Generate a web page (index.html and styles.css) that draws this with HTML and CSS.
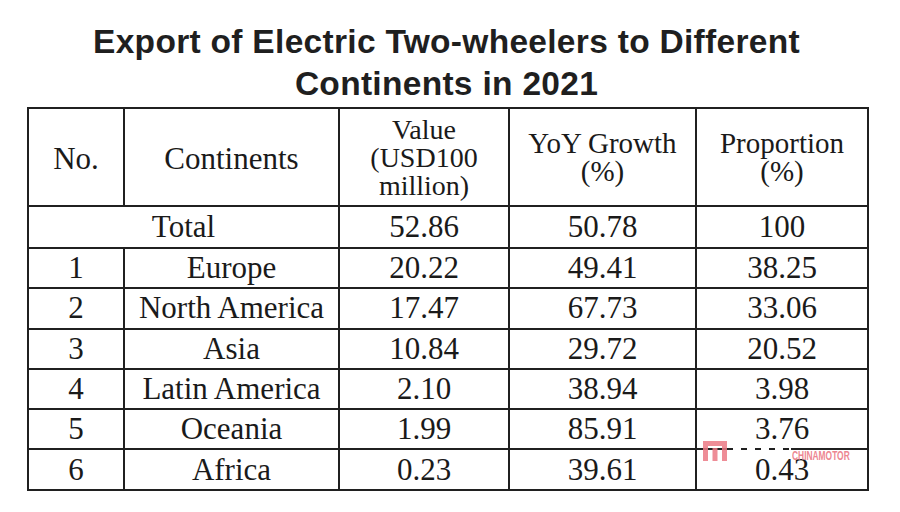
FILE: index.html
```html
<!DOCTYPE html>
<html lang="en">
<head>
<meta charset="utf-8">
<title>Export of Electric Two-wheelers to Different Continents in 2021</title>
<link rel="stylesheet" href="styles.css">
</head>
<body>
<div class="page">
  <h1 class="title">Export of Electric Two-wheelers to Different<br>Continents in 2021</h1>
  <div class="table-wrap">
    <table class="data">
      <colgroup>
        <col class="c-no"><col class="c-cont"><col class="c-val"><col class="c-yoy"><col class="c-prop">
      </colgroup>
      <thead>
        <tr class="head">
          <th>No.</th>
          <th>Continents</th>
          <th class="multi three">Value<br>(USD100<br>million)</th>
          <th class="multi">YoY Growth<br>(%)</th>
          <th class="multi">Proportion<br>(%)</th>
        </tr>
      </thead>
      <tbody>
        <tr class="total"><td colspan="2">Total</td><td>52.86</td><td>50.78</td><td>100</td></tr>
        <tr><td>1</td><td>Europe</td><td>20.22</td><td>49.41</td><td>38.25</td></tr>
        <tr><td>2</td><td>North America</td><td>17.47</td><td>67.73</td><td>33.06</td></tr>
        <tr><td>3</td><td>Asia</td><td>10.84</td><td>29.72</td><td>20.52</td></tr>
        <tr><td>4</td><td>Latin America</td><td>2.10</td><td>38.94</td><td>3.98</td></tr>
        <tr><td>5</td><td>Oceania</td><td>1.99</td><td>85.91</td><td>3.76</td></tr>
        <tr><td>6</td><td>Africa</td><td>0.23</td><td>39.61</td><td>0.43</td></tr>
      </tbody>
    </table>
    <div class="watermark">
      <svg class="wm-logo" width="24" height="20" viewBox="0 0 24 20">
        <path d="M0 0h24v5H0z M0 5h5v15H0z M9.5 7h5v13h-5z M19 5h5v15h-5z" fill="#ec7a86"/>
      </svg>
      <span class="wm-dash"></span>
      <span class="wm-text">CHINAMOTOR</span>
    </div>
  </div>
</div>
</body>
</html>
```

FILE: styles.css
```css
html, body {
  margin: 0;
  padding: 0;
  background: #ffffff;
}

.page {
  width: 900px;
  height: 512px;
  padding-top: 21px;
  box-sizing: border-box;
}

.title {
  margin: 0 0 2px 0;
  font-family: "Liberation Sans", Arial, sans-serif;
  font-weight: 700;
  font-size: 33.5px;
  line-height: 42px;
  color: #1f1f1f;
  text-align: center;
  letter-spacing: 0.3px;
  width: 893px;
}

.table-wrap {
  position: relative;
  margin-left: 27px;
  width: 840px;
}

.data {
  border-collapse: collapse;
  width: 840px;
  table-layout: fixed;
  font-family: "Liberation Serif", "Times New Roman", serif;
  font-size: 31px;
  color: #1a1a1a;
  font-variant-numeric: oldstyle-nums;
}

.c-no { width: 96px; }
.c-cont { width: 215px; }
.c-val { width: 170px; }
.c-yoy { width: 187px; }
.c-prop { width: 172px; }

.data th,
.data td {
  border: 2px solid #202020;
  padding: 0;
  text-align: center;
  vertical-align: middle;
  font-weight: 400;
  line-height: 34px;
}

.data .head { height: 98px; }
.data .head th { padding-top: 4px; }
.data .head th.multi {
  font-size: 29px;
  line-height: 28px;
  padding-top: 0;
}
.data .head th.three {
  font-size: 28px;
  line-height: 28px;
  padding-top: 2px;
}

.data .total { height: 42px; }
.data tbody tr { height: 40.3px; }

.watermark {
  position: absolute;
  left: 676px;
  top: 334px;
  display: flex;
  align-items: flex-start;
  pointer-events: none;
}

.wm-logo {
  opacity: 0.85;
  flex: none;
}

.wm-dash {
  width: 58px;
  height: 2px;
  margin: 7px 1px 0 6px;
  background: repeating-linear-gradient(90deg, #ffffff 0 8px, transparent 8px 14px);
}

.wm-text {
  display: inline-block;
  font-family: "Liberation Sans", Arial, sans-serif;
  font-weight: 700;
  font-size: 12px;
  line-height: 12px;
  color: #ec7a86;
  opacity: 0.9;
  margin-top: 9px;
  transform: scaleX(0.7);
  transform-origin: left center;
}
```
